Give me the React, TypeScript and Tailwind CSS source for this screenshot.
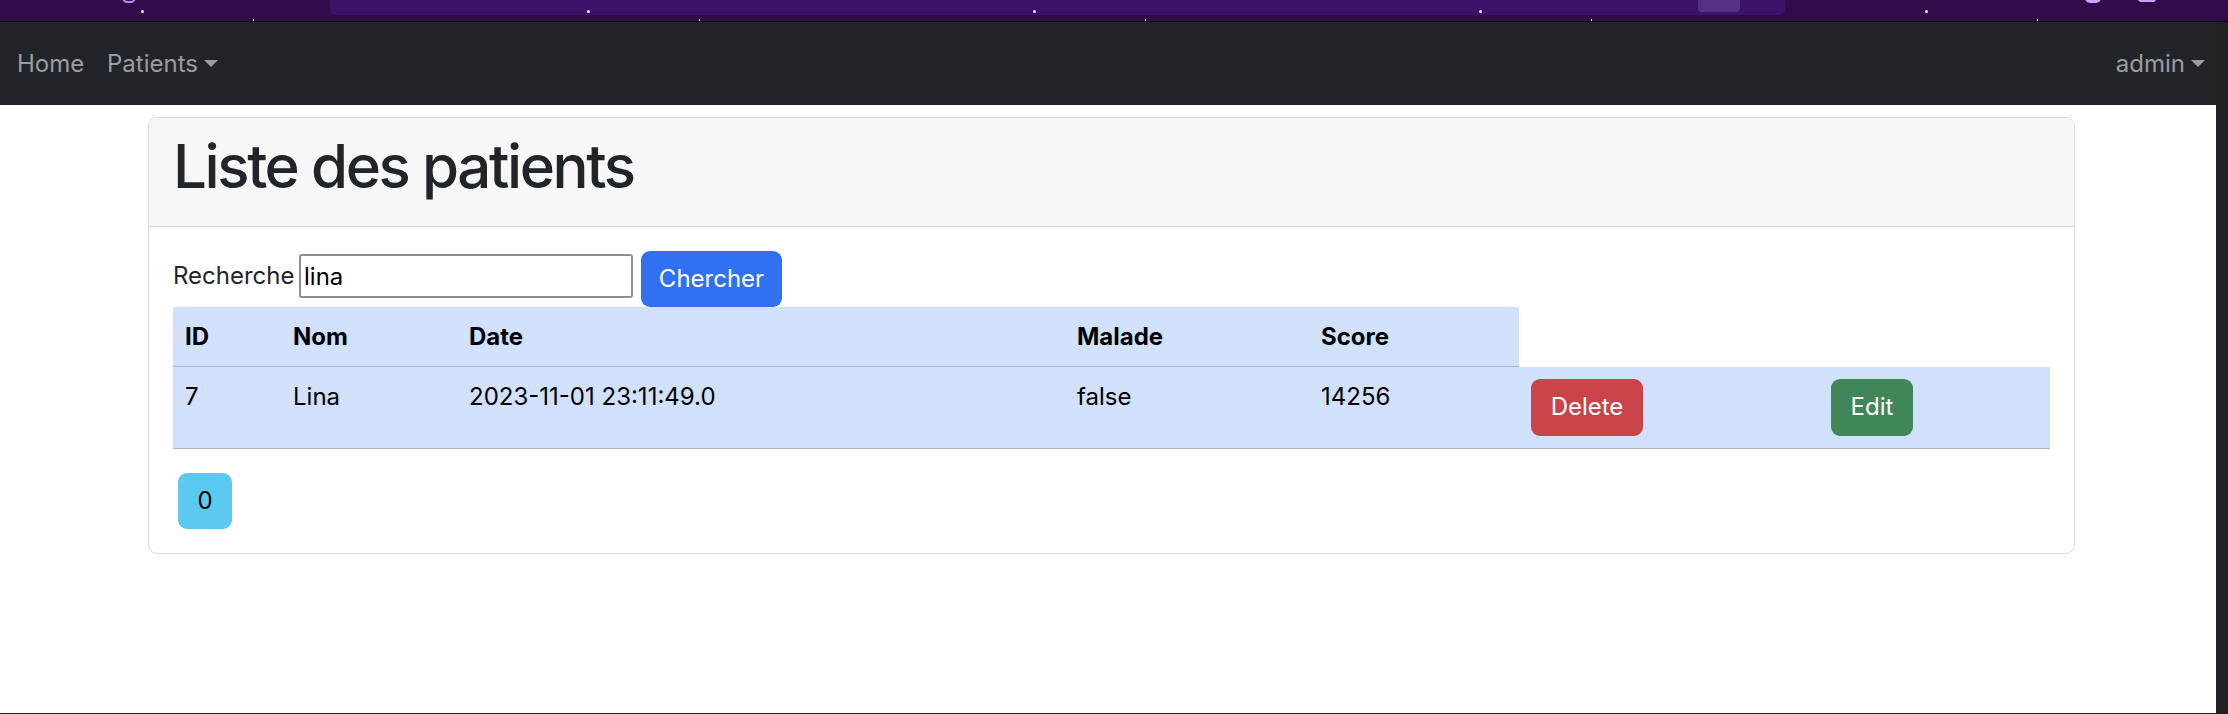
import React from "react";

function Caret() {
  return (
    <span className="ml-[6px] inline-block h-0 w-0 border-x-[7px] border-t-[7px] border-x-transparent border-t-[#9b9d9f]" />
  );
}

function StarRow({ top, size }: { top: string; size: string }) {
  return (
    <div className={`absolute left-[141px] flex gap-[443px] ${top}`}>
      {[0, 1, 2, 3, 4].map((i) => (
        <span key={i} className={`rounded-full bg-[#f3e6ff] ${size}`} />
      ))}
    </div>
  );
}

export default function App() {
  const headers = ["ID", "Nom", "Date", "Malade", "Score"];
  const row = ["7", "Lina", "2023-11-01 23:11:49.0", "false", "14256"];
  return (
    <div className="relative flex h-[714px] w-full flex-col overflow-hidden bg-white font-['Inter',sans-serif] text-[#212529]">
      {/* browser theme strip */}
      <div className="relative flex h-[22px] w-full shrink-0 items-start border-b border-[#0b0312] bg-[#320b4b] pl-[330px]">
        <div className="flex h-[15px] w-[1455px] items-start justify-end rounded-b-[6px] bg-[#3e1269] pr-[45px]">
          <div className="h-[12px] w-[42px] rounded-b-[4px] bg-[#553083]" />
        </div>
        <StarRow top="top-[10px]" size="h-[3px] w-[3px]" />
        <div className="absolute left-[253px] top-[19px] flex gap-[445px]">
          {[0, 1, 2, 3, 4].map((i) => (
            <span key={i} className="h-[2px] w-[1px] bg-[#e8d8ff]" />
          ))}
        </div>
        <span className="absolute left-[122px] top-[-8px] h-[11px] w-[14px] rounded-full border-2 border-[#b98cf3]" />
        <span className="absolute left-[2085px] top-[-7px] h-[10px] w-[16px] rounded-full bg-[#c9a3f7]" />
        <span className="absolute left-[2138px] top-[-4px] h-[6px] w-[18px] rounded-b-[3px] border-2 border-[#c9a3f7]" />
      </div>

      <div className="flex h-[691px] shrink-0">
        <div className="flex flex-1 flex-col">
          {/* navbar */}
          <nav className="flex h-[83px] shrink-0 items-center justify-between bg-[#212529] pl-[17px] pr-[11px] text-[24px] leading-[36px] text-[#9b9d9f]">
            <div className="flex items-center">
              <span className="w-[90px]">Home</span>
              <span className="flex items-center">
                Patients
                <Caret />
              </span>
            </div>
            <span className="flex items-center">
              admin
              <Caret />
            </span>
          </nav>

          <main className="pl-[148px] pt-[12px]">
            <div className="w-[1927px] overflow-hidden rounded-[9px] border border-[#d9d9d9]">
              <div className="border-b border-[#d9d9d9] bg-[#f7f7f7] px-[24px] py-[12px]">
                <h1 className="mb-[12px] text-[60px] font-medium leading-[72px] tracking-[-2.4px]">
                  Liste des patients
                </h1>
              </div>
              <div className="p-[24px]">
                <form className="flex items-start" onSubmit={(e) => e.preventDefault()}>
                  <label className="mt-[7px] w-[126px] text-[24px] leading-[36px]">Recherche</label>
                  <input
                    defaultValue="lina"
                    className="mt-[3px] h-[44px] w-[334px] rounded-[3px] border-2 border-[#8f8f8f] pl-[3px] text-[24px] leading-[36px] text-black outline-none"
                  />
                  <button className="ml-[8px] h-[56px] w-[141px] rounded-[9px] bg-[#3270f2] text-[24px] leading-[36px] text-white">
                    Chercher
                  </button>
                </form>

                <table className="w-[1877px] table-fixed border-collapse text-[24px] leading-[36px] text-black">
                  <colgroup>
                    <col className="w-[108px]" />
                    <col className="w-[176px]" />
                    <col className="w-[608px]" />
                    <col className="w-[244px]" />
                    <col className="w-[210px]" />
                    <col className="w-[300px]" />
                    <col className="w-[231px]" />
                  </colgroup>
                  <thead>
                    <tr>
                      {headers.map((h) => (
                        <th
                          key={h}
                          className="border-b border-[#a8b6cc] bg-[#d1e0fb] px-[12px] pb-[11px] pt-[12px] text-left font-bold"
                        >
                          {h}
                        </th>
                      ))}
                    </tr>
                  </thead>
                  <tbody>
                    <tr>
                      {row.map((c, i) => (
                        <td key={i} className="border-b border-[#a8b6cc] bg-[#d1e0fb] p-[12px] align-top">
                          {c}
                        </td>
                      ))}
                      <td className="border-b border-[#a8b6cc] bg-[#d1e0fb] p-[12px] align-top">
                        <button className="block h-[57px] w-[112px] rounded-[9px] bg-[#cb444a] text-[24px] text-white">
                          Delete
                        </button>
                      </td>
                      <td className="border-b border-[#a8b6cc] bg-[#d1e0fb] p-[12px] align-top">
                        <button className="block h-[57px] w-[82px] rounded-[9px] bg-[#408658] text-[24px] text-white">
                          Edit
                        </button>
                      </td>
                    </tr>
                  </tbody>
                </table>

                <button className="ml-[5px] mt-[24px] block h-[56px] w-[54px] rounded-[9px] bg-[#5bc9f0] text-[24px] text-black">
                  0
                </button>
              </div>
            </div>
          </main>
        </div>
        <div className="w-[12px] shrink-0 bg-[#202124]" />
      </div>
      <div className="h-[1px] shrink-0 bg-[#202124]" />
    </div>
  );
}
